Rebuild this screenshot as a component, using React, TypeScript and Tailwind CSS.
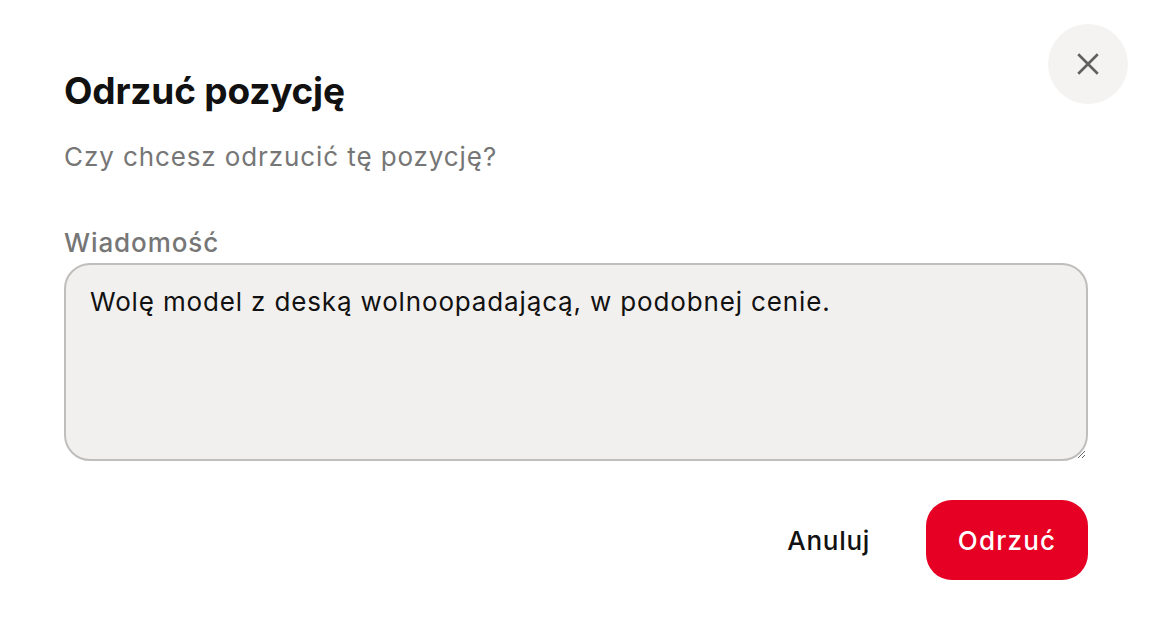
import React, { useState } from "react";

const font = { fontFamily: "Inter, 'Noto Sans', sans-serif" };

export default function App() {
  const [message, setMessage] = useState(
    "Wolę model z deską wolnoopadającą, w podobnej cenie."
  );

  return (
    <div className="relative h-[644px] w-full bg-white" style={font}>
      {/* Close button */}
      <button
        aria-label="Zamknij"
        className="absolute right-[24px] top-[24px] flex h-[80px] w-[80px] items-center justify-center rounded-full bg-[#f4f3f2]"
      >
        <svg width="26" height="26" viewBox="0 0 24 24" fill="none" stroke="#5f5f5f" strokeWidth="2.4" strokeLinecap="butt">
          <path d="M3 3L21 21M21 3L3 21" />
        </svg>
      </button>

      <div className="flex flex-col px-[64px] pt-[67px]">
        <h1 className="text-[37px] font-bold leading-[48px] tracking-[-0.2px] text-[#111111]">
          Odrzuć pozycję
        </h1>
        <p className="mt-[26px] text-[26px] leading-[32px] tracking-[0.9px] text-[#767676]">
          Czy chcesz odrzucić tę pozycję?
        </p>

        <label className="mt-[54px] text-[26px] font-medium leading-[32px] tracking-[0.9px] text-[#767676]">
          Wiadomość
        </label>
        <textarea
          value={message}
          onChange={(e) => setMessage(e.target.value)}
          className="mt-[4px] h-[198px] w-full rounded-[26px] border-2 border-[#bfbebc] bg-[#f1f0ee] px-[24px] pb-[18px] pt-[21px] text-[26px] leading-[32px] tracking-[0.85px] text-[#111111] outline-none"
          style={font}
        />

        <div className="mt-[39px] flex items-center justify-end gap-[34px]">
          <button className="h-[80px] rounded-[24px] px-[22px] text-[26px] font-medium tracking-[0.7px] text-[#111111]">
            Anuluj
          </button>
          <button className="h-[80px] w-[162px] rounded-[26px] bg-[#e60023] text-[26px] font-medium tracking-[1.2px] text-white">
            Odrzuć
          </button>
        </div>
      </div>
    </div>
  );
}
